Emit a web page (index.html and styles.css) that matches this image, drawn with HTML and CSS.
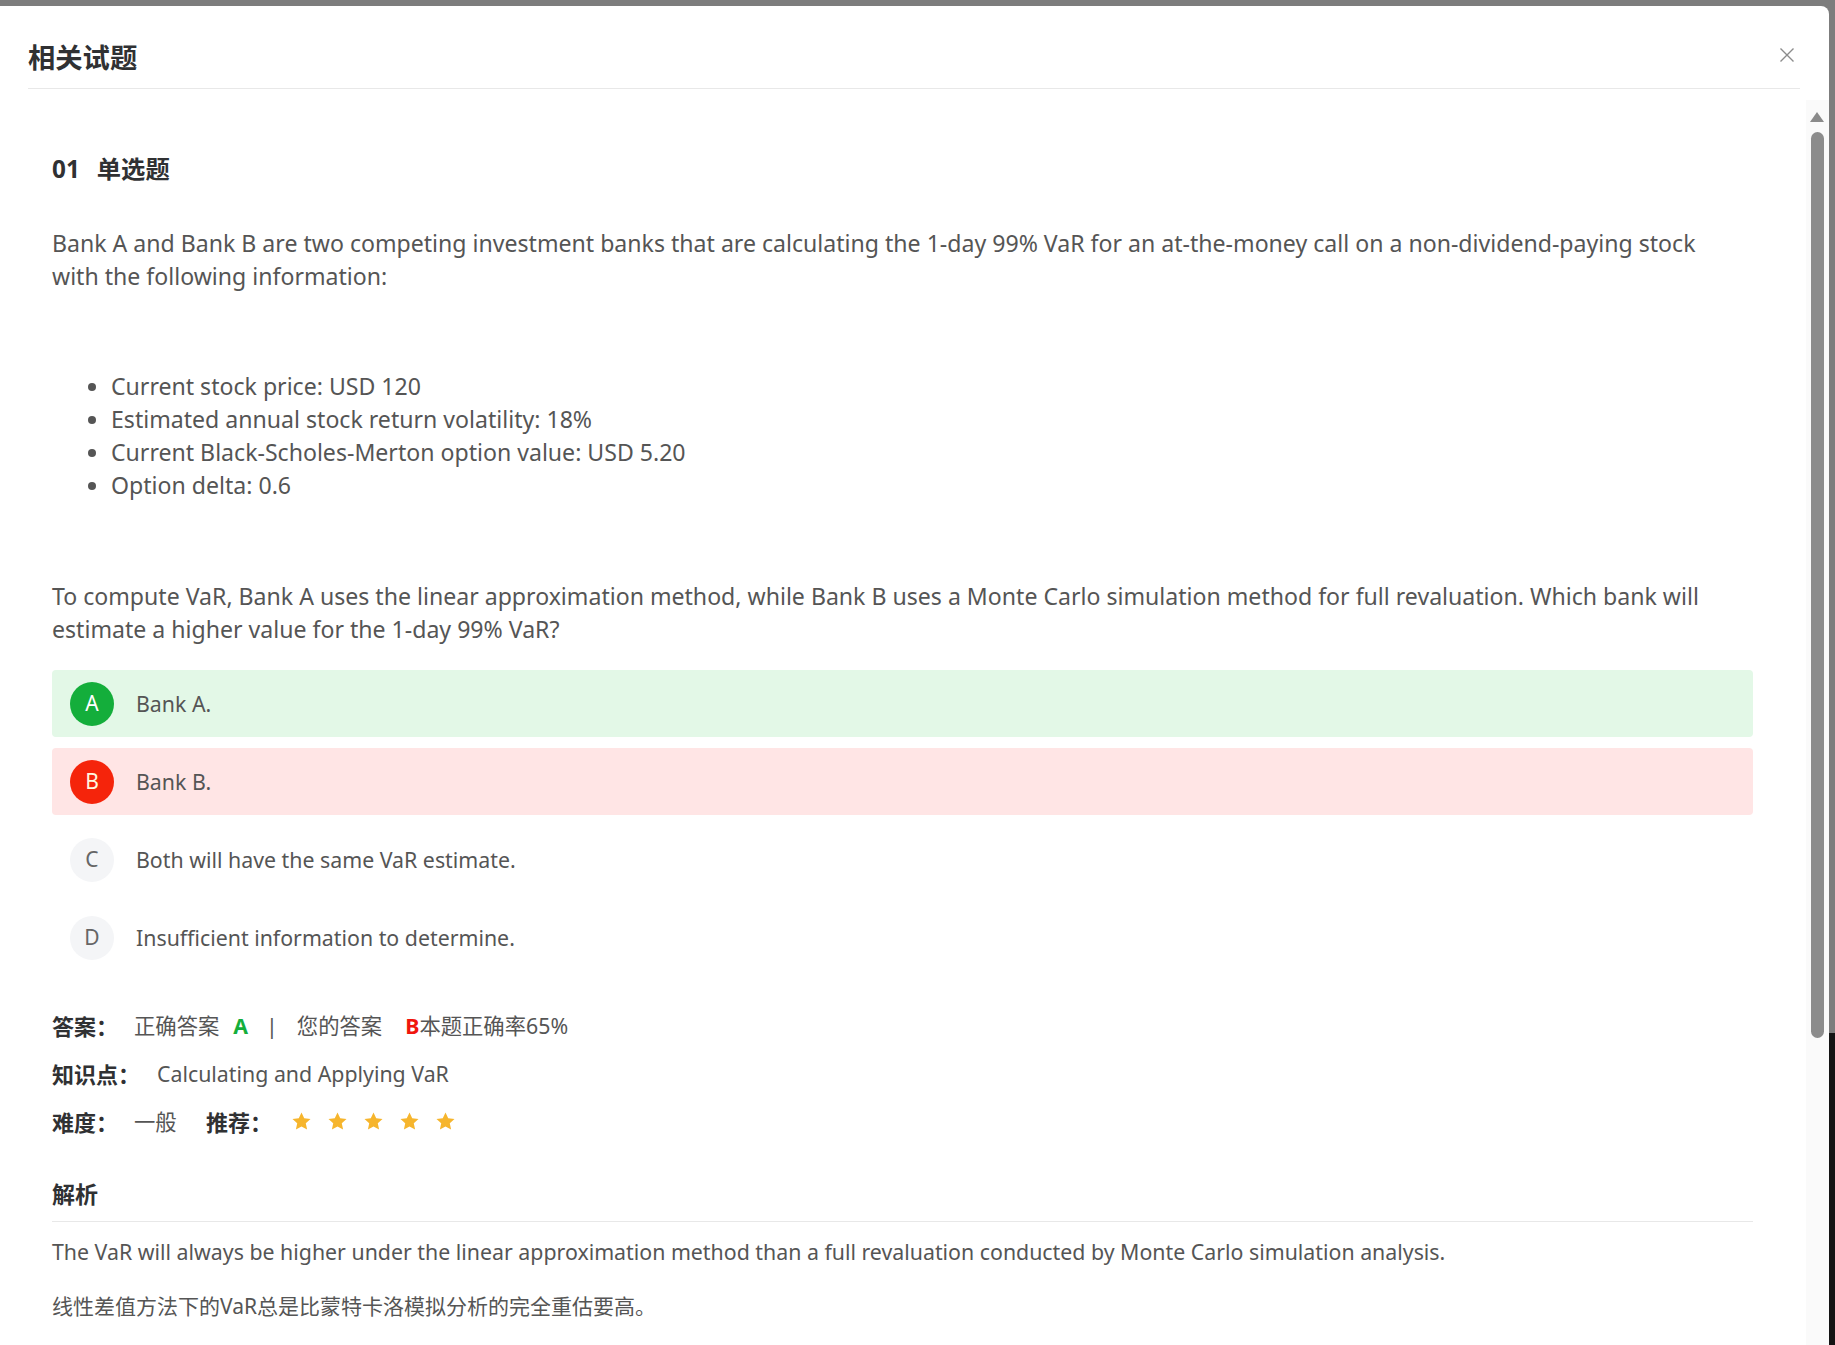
FILE: index.html
```html
<!DOCTYPE html>
<html lang="zh-CN">
<head>
<meta charset="utf-8">
<title>相关试题</title>
<link rel="stylesheet" href="styles.css">
</head>
<body>
<div class="modal">
  <div class="modal-header">
    <h2 class="modal-title">相关试题</h2>
    <button class="close" aria-label="关闭">
      <svg width="16" height="16" viewBox="0 0 16 16"><path d="M1.5 1.5 L14.5 14.5 M14.5 1.5 L1.5 14.5" stroke="#8c8c8c" stroke-width="1.4" fill="none"/></svg>
    </button>
  </div>
  <div class="modal-body">
    <div class="content">
      <div class="qhead"><span class="qnum">01</span><span class="qtype">单选题</span></div>
      <p class="stem first">Bank A and Bank B are two competing investment banks that are calculating the 1-day 99% VaR for an at-the-money call on a non-dividend-paying stock with the following information:</p>
      <ul class="facts">
        <li>Current stock price: USD 120</li>
        <li>Estimated annual stock return volatility: 18%</li>
        <li>Current Black-Scholes-Merton option value: USD 5.20</li>
        <li>Option delta: 0.6</li>
      </ul>
      <p class="stem second">To compute VaR, Bank A uses the linear approximation method, while Bank B uses a Monte Carlo simulation method for full revaluation. Which bank will estimate a higher value for the 1-day 99% VaR?</p>
      <div class="options">
        <div class="opt correct"><span class="letter">A</span><span class="opt-text">Bank A.</span></div>
        <div class="opt wrong"><span class="letter">B</span><span class="opt-text">Bank B.</span></div>
        <div class="opt"><span class="letter">C</span><span class="opt-text">Both will have the same VaR estimate.</span></div>
        <div class="opt"><span class="letter">D</span><span class="opt-text">Insufficient information to determine.</span></div>
      </div>
      <div class="meta">
        <div class="row">
          <span class="label w-ans">答案：</span><span>正确答案</span><span class="right-ans">A</span><span class="sep">|</span><span class="yours">您的答案</span><span class="wrong-ans">B</span><span>本题正确率65%</span>
        </div>
        <div class="row">
          <span class="label w-kp">知识点：</span><span>Calculating and Applying VaR</span>
        </div>
        <div class="row">
          <span class="label w-ans">难度：</span><span class="level">一般</span><span class="label w-rec">推荐：</span>
          <span class="stars">
            <svg class="star" viewBox="0 0 24 24"><path d="M12 1.8l3.1 6.6 7.2.8-5.4 4.9 1.5 7.1L12 17.6l-6.4 3.6 1.5-7.1-5.4-4.9 7.2-.8z"/></svg>
            <svg class="star" viewBox="0 0 24 24"><path d="M12 1.8l3.1 6.6 7.2.8-5.4 4.9 1.5 7.1L12 17.6l-6.4 3.6 1.5-7.1-5.4-4.9 7.2-.8z"/></svg>
            <svg class="star" viewBox="0 0 24 24"><path d="M12 1.8l3.1 6.6 7.2.8-5.4 4.9 1.5 7.1L12 17.6l-6.4 3.6 1.5-7.1-5.4-4.9 7.2-.8z"/></svg>
            <svg class="star" viewBox="0 0 24 24"><path d="M12 1.8l3.1 6.6 7.2.8-5.4 4.9 1.5 7.1L12 17.6l-6.4 3.6 1.5-7.1-5.4-4.9 7.2-.8z"/></svg>
            <svg class="star" viewBox="0 0 24 24"><path d="M12 1.8l3.1 6.6 7.2.8-5.4 4.9 1.5 7.1L12 17.6l-6.4 3.6 1.5-7.1-5.4-4.9 7.2-.8z"/></svg>
          </span>
        </div>
      </div>
      <h3 class="analysis-title">解析</h3>
      <p class="analysis en">The VaR will always be higher under the linear approximation method than a full revaluation conducted by Monte Carlo simulation analysis.</p>
      <p class="analysis zh">线性差值方法下的VaR总是比蒙特卡洛模拟分析的完全重估要高。</p>
    </div>
    <div class="scrollbar">
      <div class="arrow"></div>
      <div class="thumb"></div>
    </div>
  </div>
</div>
</body>
</html>
```

FILE: styles.css
```css
* { box-sizing: border-box; margin: 0; padding: 0; }
html, body { height: 100%; }
body {
  background: linear-gradient(to bottom, #7d7d7d 0, #7d7d7d 1033px, #141414 1033px);
  font-family: "Noto Sans", "Noto Sans CJK SC", sans-serif;
  color: #555;
  overflow: hidden;
}
.modal {
  margin-top: 6px;
  width: 1829px;
  height: 1339px;
  background: #fff;
  border-radius: 0 8px 0 0;
  display: flex;
  flex-direction: column;
  overflow: hidden;
}
.modal-header {
  flex: none;
  height: 83px;
  margin: 0 29px 0 28px;
  padding-top: 32px;
  border-bottom: 1px solid #e8e8e8;
  display: flex;
  justify-content: space-between;
  align-items: flex-start;
}
.modal-title {
  font-family: "Noto Sans CJK SC", sans-serif;
  font-size: 27.3px;
  line-height: 36px;
  font-weight: 700;
  color: #303133;
}
.close {
  border: 0;
  background: none;
  width: 16px;
  height: 16px;
  margin: 9px 5px 0 0;
  display: block;
}
.close svg { display: block; }
.modal-body {
  flex: 1;
  display: flex;
  margin-left: 28px;
  min-height: 0;
}
.content {
  flex: 1;
  padding: 61.5px 53px 0 24px;
  overflow: hidden;
  font-size: 21.33px;
  line-height: 33px;
}
.qhead {
  font-family: "Noto Sans CJK SC", sans-serif;
  font-size: 24.3px;
  font-weight: 700;
  color: #303133;
  line-height: 33px;
}
.qnum { margin-right: 17px; font-family: "Noto Sans", sans-serif; }
.stem, .facts { color: #555; font-size: 23.1px; }
.stem { max-width: 1665px; }
.stem.first { margin-top: 42px; }
.facts { margin-top: 77px; padding-left: 59px; }
.stem.second { margin-top: 78.5px; }
.options { margin-top: 24px; }
.opt {
  height: 67px;
  border-radius: 4px;
  display: flex;
  align-items: center;
  padding-left: 18px;
  margin-bottom: 11px;
}
.opt:last-child { margin-bottom: 0; }
.opt.correct { background: #e3f8e7; }
.opt.wrong { background: #ffe5e5; }
.letter {
  width: 44px;
  height: 44px;
  border-radius: 50%;
  background: #f4f5f7;
  color: #666;
  display: flex;
  align-items: center;
  justify-content: center;
  font-size: 21px;
  margin-right: 22px;
  flex: none;
}
.correct .letter { background: #14ae3b; color: #fff; }
.wrong .letter { background: #f5240b; color: #fff6e0; }
.opt-text { color: #555; }
.meta { margin-top: 38px; }
.row {
  display: flex;
  align-items: center;
  height: 33px;
  margin-bottom: 15px;
  color: #555;
  white-space: nowrap;
}
.row:last-child { margin-bottom: 0; }
.label {
  font-family: "Noto Sans CJK SC", sans-serif;
  font-weight: 700;
  font-size: 22px;
  color: #303133;
  flex: none;
}
.w-ans { width: 82px; }
.w-kp { width: 105px; }
.w-rec { width: 85px; }
.right-ans { color: #14ae3b; font-weight: 700; margin-left: 14px; }
.sep { margin-left: 18px; color: #555; }
.yours { margin-left: 19px; }
.wrong-ans { color: #f0150d; font-weight: 700; margin-left: 23px; }
.level { width: 72px; }
.stars { display: flex; align-items: center; }
.star { width: 21px; height: 21px; fill: #f6b52d; margin-right: 15px; display: block; }
.analysis-title {
  margin-top: 39px;
  font-family: "Noto Sans CJK SC", sans-serif;
  font-size: 23px;
  font-weight: 700;
  line-height: 33px;
  color: #303133;
  padding-bottom: 11px;
  border-bottom: 1px solid #e8e8e8;
}
.analysis { color: #555; }
.analysis.en { margin-top: 13px; }
.analysis.zh { margin-top: 22px; font-size: 21px; }
.scrollbar {
  flex: none;
  width: 23px;
  margin-top: 11px;
  background: #fafafa;
  position: relative;
}
.arrow {
  position: absolute;
  left: 4px;
  top: 12px;
  width: 0;
  height: 0;
  border-left: 7.5px solid transparent;
  border-right: 7.5px solid transparent;
  border-bottom: 10px solid #8a8a8a;
}
.thumb {
  position: absolute;
  left: 5px;
  top: 32px;
  width: 13px;
  height: 906px;
  border-radius: 7px;
  background: #8c8c8c;
}
```
